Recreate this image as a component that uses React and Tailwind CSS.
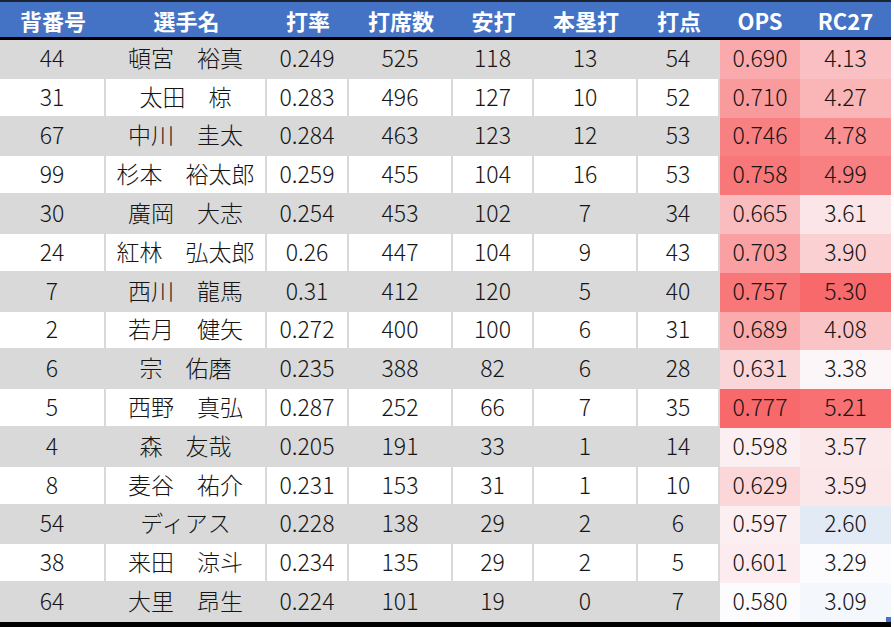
import React from 'react';

const HEAD = ['背番号', '選手名', '打率', '打席数', '安打', '本塁打', '打点', 'OPS', 'RC27'];

const ROWS = [
    ['44', '頓宮　裕真', '0.249', '525', '118', '13', '54', 0.69, 4.13],
    ['31', '太田　椋', '0.283', '496', '127', '10', '52', 0.71, 4.27],
    ['67', '中川　圭太', '0.284', '463', '123', '12', '53', 0.746, 4.78],
    ['99', '杉本　裕太郎', '0.259', '455', '104', '16', '53', 0.758, 4.99],
    ['30', '廣岡　大志', '0.254', '453', '102', '7', '34', 0.665, 3.61],
    ['24', '紅林　弘太郎', '0.26', '447', '104', '9', '43', 0.703, 3.9],
    ['7', '西川　龍馬', '0.31', '412', '120', '5', '40', 0.757, 5.3],
    ['2', '若月　健矢', '0.272', '400', '100', '6', '31', 0.689, 4.08],
    ['6', '宗　佑磨', '0.235', '388', '82', '6', '28', 0.631, 3.38],
    ['5', '西野　真弘', '0.287', '252', '66', '7', '35', 0.777, 5.21],
    ['4', '森　友哉', '0.205', '191', '33', '1', '14', 0.598, 3.57],
    ['8', '麦谷　祐介', '0.231', '153', '31', '1', '10', 0.629, 3.59],
    ['54', 'ディアス', '0.228', '138', '29', '2', '6', 0.597, 2.6],
    ['38', '来田　涼斗', '0.234', '135', '29', '2', '5', 0.601, 3.29],
    ['64', '大里　昂生', '0.224', '101', '19', '0', '7', 0.58, 3.09],
];

const WHITE = [252, 252, 255];
const RED = [248, 105, 107];
const BLUE = [90, 138, 198];

function mix(a, b, t) {
    t = Math.max(0, Math.min(1, t));
    return `rgb(${a.map((v, i) => Math.round(v + (b[i] - v) * t)).join(',')})`;
}

// conditional format scales (white -> red, a little blue on RC27 low end)
const opsColor = (v) => mix(WHITE, RED, (v - 0.58) / (0.777 - 0.58));
const rcColor = (v) =>
    v >= 3.3 ? mix(WHITE, RED, (v - 3.3) / 2.0) : mix(WHITE, BLUE, (3.3 - v) / 4.4);

const GRID = 'grid grid-cols-[106px_161px_82px_104px_81px_104px_82px_80px_91px]';

export default function App() {
    return (
        <div
            className="relative w-[894px] h-[627px] bg-white overflow-hidden text-[23px] text-[#151515]"
            style={{ fontFamily: '"Noto Sans CJK JP", "Noto Sans", sans-serif' }}
        >
            <div className="w-[891px]">
                <div
                    className={`${GRID} h-[40px] bg-[#4472c4] border-t-2 border-t-[#1c2333] border-b-[3px] border-b-black text-white font-bold text-[22px]`}
                >
                    {HEAD.map((h) => (
                        <div key={h} className="flex items-center justify-center leading-none">
                            {h}
                        </div>
                    ))}
                </div>
                <div className="border-b-[5px] border-black">
                    {ROWS.map((r, i) => {
                        const bg = i % 2 === 0 ? 'bg-[#d9d9d9]' : 'bg-white';
                        return (
                            <div key={i} className={`${GRID} h-[38.8px]`}>
                                {r.slice(0, 7).map((c, j) => (
                                    <div
                                        key={j}
                                        className={`${bg} flex items-center justify-center pb-[2px] border-b-2 border-r-2 border-[#d9d9d9] leading-none font-light`}
                                    >
                                        {c}
                                    </div>
                                ))}
                                <div
                                    className="flex items-center justify-center pb-[4px] leading-none font-light"
                                    style={{ background: opsColor(r[7]) }}
                                >
                                    {r[7].toFixed(3)}
                                </div>
                                <div
                                    className="flex items-center justify-center pb-[4px] leading-none font-light"
                                    style={{ background: rcColor(r[8]) }}
                                >
                                    {r[8].toFixed(2)}
                                </div>
                            </div>
                        );
                    })}
                </div>
            </div>
            {/* table resize handle */}
            <div className="absolute left-[886px] top-[617px] w-[5px] h-[5px] bg-[#4472c4]" />
        </div>
    );
}
